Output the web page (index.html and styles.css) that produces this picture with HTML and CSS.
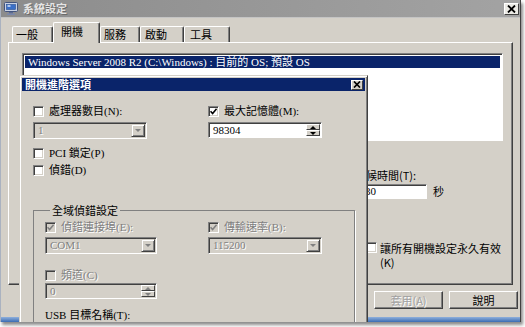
FILE: index.html
```html
<!DOCTYPE html>
<html>
<head>
<meta charset="utf-8">
<title>系統設定</title>
<link rel="stylesheet" href="styles.css">
</head>
<body>
<div class="frame">
  <div class="win">
    <div class="titlebar">
      <svg class="appicon" width="14" height="13" viewBox="0 0 14 13">
        <rect x="0.5" y="0.5" width="13" height="9" rx="1" fill="#c9d2e4" stroke="#44557e"/>
        <rect x="2.5" y="2.5" width="9" height="5" fill="#3a6fc8" stroke="#2a4f90" stroke-width="0.6"/>
        <rect x="3.5" y="3.3" width="3" height="1.4" fill="#e6eefc"/>
        <rect x="5" y="10" width="4" height="1.5" fill="#5b6a93"/>
        <rect x="3" y="11.5" width="8" height="1.5" fill="#7a88ac"/>
      </svg>
      <span class="title">系統設定</span>
      <span class="closebtn">
        <svg width="9" height="8" viewBox="0 0 9 8"><path d="M1 0.5 L8 7.5 M8 0.5 L1 7.5" stroke="#000" stroke-width="1.8"/></svg>
      </span>
    </div>
    <div class="tabs">
      <div class="tab t1">一般</div>
      <div class="tab sel">開機</div>
      <div class="tab t3">服務</div>
      <div class="tab t4">啟動</div>
      <div class="tab t5">工具</div>
    </div>
    <div class="panel">
      <div class="listbox">
        <div class="row-sel">Windows Server 2008 R2 (C:\Windows) : 目前的 OS; 預設 OS</div>
      </div>
      <div class="right-col">
        <div class="lbl">等候時間(T):</div>
        <div class="tline"><span class="field timeout">30</span><span class="sec">秒</span></div>
        <div class="perm"><span class="cb"></span><span class="permtext">讓所有開機設定永久有效(K)</span></div>
      </div>
    </div>
    <div class="buttons">
      <span class="btn disabled">套用(A)</span>
      <span class="btn">說明</span>
    </div>
    <div class="strip"></div>
  </div>

  <div class="dialog">
    <div class="dtitle">
      <span>開機進階選項</span>
      <span class="dclose">
        <svg width="8" height="7" viewBox="0 0 8 7"><path d="M1 0.5 L7 6.5 M7 0.5 L1 6.5" stroke="#000" stroke-width="1.7"/></svg>
      </span>
    </div>
    <div class="dbody">
      <div class="cols">
        <div class="col">
          <div class="chk"><span class="cb"></span><span>處理器數目(N):</span></div>
          <div class="combo dis w114"><span class="val">1</span><span class="arrow"><span class="tri"></span></span></div>
          <div class="chk pci"><span class="cb"></span><span>PCI 鎖定(P)</span></div>
          <div class="chk dbg"><span class="cb"></span><span>偵錯(D)</span></div>
        </div>
        <div class="col">
          <div class="chk"><span class="cb on">
            <svg width="7" height="7" viewBox="0 0 7 7"><path d="M0.5 3.2 L2.6 5.6 L6.6 0.8" fill="none" stroke="#000" stroke-width="1.6"/></svg>
          </span><span>最大記憶體(M):</span></div>
          <div class="spin w114"><span class="val">98304</span><span class="spinbtns"><span class="sb"><span class="tri up"></span></span><span class="sb"><span class="tri"></span></span></span></div>
        </div>
      </div>
      <fieldset class="group">
        <legend>全域偵錯設定</legend>
        <div class="gcols">
          <div class="col">
            <div class="chk muted"><span class="cb off on">
              <svg width="7" height="7" viewBox="0 0 7 7"><path d="M0.5 3.2 L2.6 5.6 L6.6 0.8" fill="none" stroke="#808080" stroke-width="1.6"/></svg>
            </span><span>偵錯連接埠(E):</span></div>
            <div class="combo dis w112"><span class="val">COM1</span><span class="arrow"><span class="tri"></span></span></div>
            <div class="chk muted chan"><span class="cb off"></span><span>頻道(C)</span></div>
            <div class="spin dis w112 chanin"><span class="val">0</span><span class="spinbtns"><span class="sb"><span class="tri up"></span></span><span class="sb"><span class="tri"></span></span></span></div>
            <div class="usb">USB 目標名稱(T):</div>
          </div>
          <div class="col">
            <div class="chk muted"><span class="cb off on">
              <svg width="7" height="7" viewBox="0 0 7 7"><path d="M0.5 3.2 L2.6 5.6 L6.6 0.8" fill="none" stroke="#808080" stroke-width="1.6"/></svg>
            </span><span>傳輸速率(B):</span></div>
            <div class="combo dis w114"><span class="val">115200</span><span class="arrow"><span class="tri"></span></span></div>
          </div>
        </div>
      </fieldset>
    </div>
  </div>
</div>
</body>
</html>
```

FILE: styles.css
```css
html, body {
  margin: 0;
  padding: 0;
  background: #ffffff;
}
body {
  width: 525px;
  height: 327px;
  overflow: hidden;
  font-family: "Liberation Serif", "Noto Sans CJK TC", serif;
  font-size: 11px;
  color: #000;
}
.frame {
  position: relative;
  width: 521px;
  height: 322px;
  overflow: hidden;
  box-shadow: 2px 3px 3px rgba(0, 0, 0, 0.45);
}
.win {
  height: 100%;
  box-sizing: border-box;
  display: flex;
  flex-direction: column;
  background: #d4d0c8;
  border-left: 1px solid #aab2c0;
  border-right: 1px solid #404040;
}

/* title bar */
.titlebar {
  height: 17px;
  flex: none;
  display: flex;
  align-items: center;
  padding-left: 3px;
  background: linear-gradient(to right, #8c8c8c, #a3a3a3);
  border-bottom: 1px solid #c4c4c4;
}
.appicon { flex: none; }
.title {
  margin-left: 5px;
  color: #e4e4e4;
  font-weight: bold;
  font-family: "Noto Sans CJK TC", sans-serif;
  font-size: 11px;
  line-height: 13px;
  text-shadow: 1px 1px 0 #6a6a6a;
}
.closebtn {
  margin-left: auto;
  margin-right: 1px;
  width: 15px;
  height: 12px;
  box-sizing: border-box;
  display: flex;
  align-items: center;
  justify-content: center;
  background: #ecebe6;
  border: 1px solid;
  border-color: #fff #404040 #404040 #fff;
}

/* tabs */
.tabs {
  flex: none;
  margin-top: 4px;
  height: 20px;
  display: flex;
  align-items: flex-end;
  padding-left: 11px;
  position: relative;
  z-index: 1;
}
.tab {
  height: 16px;
  box-sizing: border-box;
  border-top: 1px solid #fff;
  border-left: 1px solid #fff;
  border-right: 1px solid #404040;
  box-shadow: inset -1px 0 0 #808080;
  border-radius: 2px 2px 0 0;
  line-height: 14px;
  font-family: "Noto Sans CJK TC", sans-serif;
  background: #d4d0c8;
}
.t1 { width: 41px; padding-left: 3px; }
.sel { width: 47px; height: 21px; padding-left: 7px; margin-bottom: -1px; line-height: 16px; }
.t3 { width: 40px; padding-left: 3px; }
.t4 { width: 44px; padding-left: 4px; }
.t5 { width: 46px; padding-left: 5px; }

/* main panel */
.panel {
  flex: none;
  margin-left: 7px;
  width: 505px;
  height: 243px;
  box-sizing: border-box;
  border: 1px solid;
  border-color: #fff #404040 #404040 #fff;
  box-shadow: inset -1px -1px 0 #808080;
  padding: 10px 0 0 13px;
}
.listbox {
  width: 481px;
  height: 88px;
  box-sizing: border-box;
  border: 1px solid;
  border-color: #808080 #fff #fff #808080;
  box-shadow: inset 1px 1px 0 #404040;
  background: #fff;
  padding: 2px 2px 0 2px;
}
.row-sel {
  height: 12px;
  line-height: 12px;
  background: #0a246a;
  color: #fff;
  padding-left: 3px;
  white-space: nowrap;
  overflow: hidden;
}
.right-col {
  margin-left: 333px;
  margin-top: 28px;
}
.lbl {
  line-height: 12px;
  font-family: "Noto Sans CJK TC", sans-serif;
}
.tline {
  margin-top: 2px;
  display: flex;
  align-items: center;
}
.field {
  box-sizing: border-box;
  height: 15px;
  background: #fff;
  border: 1px solid;
  border-color: #808080 #fff #fff #808080;
  box-shadow: inset 1px 1px 0 #404040;
  padding-left: 3px;
  line-height: 13px;
}
.timeout { width: 66px; margin-left: 6px; }
.sec { margin-left: 6px; font-family: "Noto Sans CJK TC", sans-serif; }
.perm {
  margin-top: 42px;
  display: flex;
  align-items: flex-start;
}
.perm .cb { margin-left: 11px; margin-top: 1px; }
.permtext {
  margin-left: 3px;
  width: 122px;
  line-height: 14px;
  font-family: "Noto Sans CJK TC", sans-serif;
}

/* buttons */
.buttons {
  flex: none;
  margin-top: 6px;
  display: flex;
  justify-content: flex-end;
  gap: 6px;
  padding-right: 2px;
}
.btn {
  width: 69px;
  height: 18px;
  box-sizing: border-box;
  border: 1px solid;
  border-color: #fff #404040 #404040 #fff;
  box-shadow: inset -1px -1px 0 #808080;
  display: flex;
  align-items: center;
  justify-content: center;
  font-family: "Noto Sans CJK TC", sans-serif;
}
.btn.disabled {
  color: #a0a0a0;
  text-shadow: 1px 1px 0 #fff;
}
.strip {
  margin-top: auto;
  height: 5px;
  background: linear-gradient(#8fb0dc, #3b6cb3);
}

/* checkbox */
.cb {
  flex: none;
  width: 11px;
  height: 11px;
  box-sizing: border-box;
  background: #fff;
  border: 1px solid;
  border-color: #808080 #fff #fff #808080;
  box-shadow: inset 1px 1px 0 #404040, inset -1px -1px 0 #d4d0c8;
  display: flex;
  align-items: center;
  justify-content: center;
}
.cb.off { background: #d4d0c8; }

/* dialog */
.dialog {
  position: absolute;
  left: 19px;
  top: 75px;
  width: 349px;
  height: 262px;
  box-sizing: border-box;
  background: #d4d0c8;
  border: 1px solid;
  border-color: #d4d0c8 #404040 #404040 #d4d0c8;
  box-shadow: inset 1px 1px 0 #fff, inset -1px -1px 0 #808080;
  padding: 2px;
}
.dtitle {
  height: 13px;
  background: #0a246a;
  color: #fff;
  font-weight: bold;
  font-family: "Noto Sans CJK TC", sans-serif;
  line-height: 13px;
  padding-left: 3px;
  display: flex;
  align-items: center;
  justify-content: space-between;
}
.dclose {
  width: 12px;
  height: 10px;
  box-sizing: border-box;
  margin-right: 2px;
  background: #d4d0c8;
  border: 1px solid;
  border-color: #fff #404040 #404040 #fff;
  display: flex;
  align-items: center;
  justify-content: center;
}
.dbody {
  padding: 15px 0 0 11px;
}
.cols {
  display: grid;
  grid-template-columns: 175px 116px;
}
.col {
  display: flex;
  flex-direction: column;
  align-items: flex-start;
}
.chk {
  display: flex;
  align-items: center;
  height: 11px;
  line-height: 11px;
  white-space: nowrap;
}
.chk > span:last-child { margin-left: 5px; }
.chk.muted { color: #808080; text-shadow: 1px 1px 0 #fff; }
.pci { margin-top: 9px; }
.dbg { margin-top: 6px; }

.combo, .spin {
  margin-top: 5px;
  height: 17px;
  box-sizing: border-box;
  border: 1px solid;
  border-color: #808080 #fff #fff #808080;
  box-shadow: inset 1px 1px 0 #404040;
  background: #fff;
  display: flex;
  align-items: stretch;
  padding: 1px 1px 1px 2px;
}
.spin { height: 16px; }
.combo.dis, .spin.dis { background: #d4d0c8; color: #808080; }
.w114 { width: 114px; }
.w112 { width: 112px; }
.val {
  flex: 1;
  line-height: 13px;
  padding-left: 2px;
  overflow: hidden;
  white-space: nowrap;
}
.dis .val { text-shadow: 1px 1px 0 #fff; }
.arrow {
  flex: none;
  width: 14px;
  box-sizing: border-box;
  background: #d4d0c8;
  border: 1px solid;
  border-color: #d4d0c8 #404040 #404040 #d4d0c8;
  box-shadow: inset 1px 1px 0 #fff, inset -1px -1px 0 #808080;
  display: flex;
  align-items: center;
  justify-content: center;
}
.tri {
  width: 0;
  height: 0;
  border-left: 3px solid transparent;
  border-right: 3px solid transparent;
  border-top: 3px solid #000;
}
.tri.up {
  border-top: 0;
  border-bottom: 3px solid #000;
}
.dis .tri { border-top-color: #808080; }
.dis .tri.up { border-bottom-color: #808080; }
.spinbtns {
  flex: none;
  width: 14px;
  display: flex;
  flex-direction: column;
}
.sb {
  flex: 1;
  box-sizing: border-box;
  background: #d4d0c8;
  border: 1px solid;
  border-color: #fff #404040 #404040 #fff;
  display: flex;
  align-items: center;
  justify-content: center;
}

/* group box */
.group {
  margin: 28px 0 0 0;
  width: 322px;
  box-sizing: border-box;
  padding: 6px 0 0 11px;
  border: 1px solid #808080;
  box-shadow: 1px 1px 0 #fff;
  height: 140px;
}
.group legend {
  margin-left: 5px;
  padding: 0 2px;
  line-height: 12px;
  font-family: "Noto Sans CJK TC", sans-serif;
}
.gcols {
  display: grid;
  grid-template-columns: 163px 116px;
}
.gcols .combo { margin-top: 4px; }
.chan { margin-top: 16px; }
.chanin { margin-top: 2px; }
.usb {
  margin-top: 10px;
  line-height: 12px;
  white-space: nowrap;
}
```
